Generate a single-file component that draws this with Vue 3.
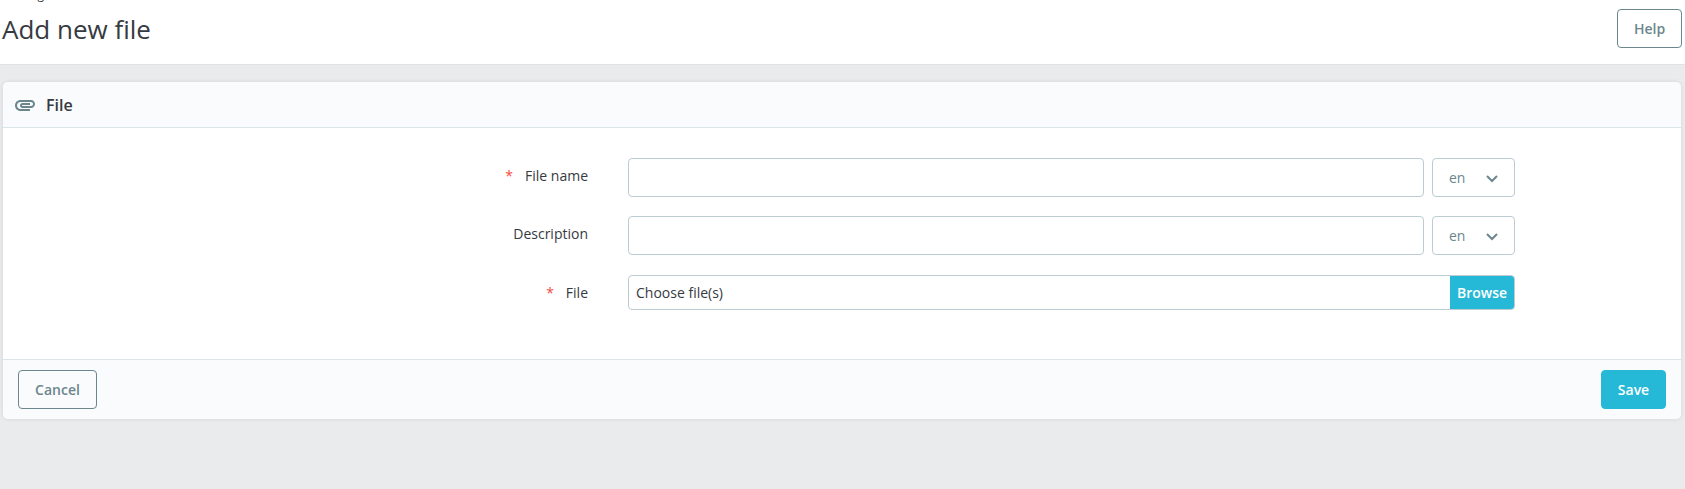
<template>
  <div class="page">
    <div class="page-head">
      <div class="head-left">
        <div class="crumb">Catalog</div>
        <h2 class="title">Add new file</h2>
      </div>
      <button type="button" class="btn btn-outline help-btn">Help</button>
    </div>

    <div class="panel">
      <div class="panel-heading">
        <svg class="clip" width="24" height="24" viewBox="0 0 24 24">
          <path fill="#6c868e" d="M2 12.500C2 9.460 4.460 7 7.500 7H18c2.210 0 4 1.790 4 4s-1.790 4-4 4H9.500C8.120 15 7 13.880 7 12.500S8.120 10 9.500 10H17v2H9.410c-.55 0-.55 1 0 1H18c1.100 0 2-.9 2-2s-.9-2-2-2H7.500C5.570 9 4 10.570 4 12.500S5.570 16 7.500 16H17v2H7.500C4.460 18 2 15.540 2 12.500z"/>
        </svg>
        <span>File</span>
      </div>

      <form class="panel-body" @submit.prevent>
        <div class="form-row">
          <label class="row-label"><span class="req">*</span>File name</label>
          <input type="text" class="form-input" />
          <div class="lang-btn">
            <span>en</span>
            <svg class="chevron" width="12" height="8" viewBox="0 0 12 8" fill="none"><path d="M1 1l5 5 5-5" stroke="#6c868e" stroke-width="2"/></svg>
          </div>
        </div>
        <div class="form-row">
          <label class="row-label">Description</label>
          <input type="text" class="form-input" />
          <div class="lang-btn">
            <span>en</span>
            <svg class="chevron" width="12" height="8" viewBox="0 0 12 8" fill="none"><path d="M1 1l5 5 5-5" stroke="#6c868e" stroke-width="2"/></svg>
          </div>
        </div>
        <div class="form-row file-row">
          <label class="row-label"><span class="req">*</span>File</label>
          <div class="file-box">
            <span class="file-text">Choose file(s)</span>
            <span class="browse">Browse</span>
          </div>
        </div>
      </form>

      <div class="panel-footer">
        <button type="button" class="btn btn-outline">Cancel</button>
        <button type="button" class="btn btn-save">Save</button>
      </div>
    </div>
  </div>
</template>

<script setup>
</script>

<style>
html, body {
  margin: 0;
  background: #eaebec;
}
</style>

<style scoped>
.page {
  height: 489px;
  overflow: hidden;
  background: #eaebec;
  font-family: "Open Sans", "Liberation Sans", sans-serif;
  font-size: 14px;
  color: #363a41;
}

.page-head {
  display: flex;
  justify-content: space-between;
  height: 55px;
  padding: 9px 3px 0 2px;
  background: #fff;
  border-bottom: 1px solid #dfe3e4;
  overflow: hidden;
}

.crumb {
  margin-top: -23px;
  height: 17px;
  font-size: 12px;
  line-height: 17px;
}

.title {
  margin: 10px 0 0;
  font-size: 26px;
  font-weight: 400;
  line-height: 33px;
}

.btn {
  box-sizing: border-box;
  height: 39px;
  border-radius: 4px;
  font-family: inherit;
  font-size: 14px;
  font-weight: 600;
  cursor: pointer;
}

.btn-outline {
  width: 79px;
  background: transparent;
  border: 1px solid #6c868e;
  color: #6c868e;
}

.help-btn {
  width: 65px;
  background: #fff;
}

.btn-save {
  width: 65px;
  background: #25b9d7;
  border: 1px solid #25b9d7;
  color: #fff;
}

.panel {
  margin: 17px 4px 0 3px;
  height: 337px;
  display: flex;
  flex-direction: column;
  background: #fff;
  border-radius: 5px;
  box-shadow: 0 0 4px rgba(0, 0, 0, 0.1);
}

.panel-heading {
  display: flex;
  align-items: center;
  gap: 9px;
  height: 45px;
  padding-left: 10px;
  background: #fafbfc;
  border-bottom: 1px solid #dbe6e9;
  border-radius: 5px 5px 0 0;
  font-size: 16px;
  font-weight: 600;
  flex-shrink: 0;
}

.panel-body {
  flex: 1;
  padding-top: 30px;
}

.form-row {
  display: flex;
  align-items: center;
  gap: 8px;
  height: 39px;
  margin-bottom: 19px;
}

.file-row {
  height: 35px;
  gap: 0;
  margin-top: 20px;
}

.row-label {
  width: 585px;
  margin-right: 32px;
  flex-shrink: 0;
  text-align: right;
  line-height: 20px;
  margin-top: -4px;
}

.file-row .row-label {
  margin-right: 40px;
  margin-top: 0;
}

.req {
  margin-right: 12px;
  color: #f54c3e;
}

.form-input {
  box-sizing: border-box;
  width: 796px;
  height: 39px;
  padding: 0 7px;
  background: #fff;
  border: 1px solid #bbcdd2;
  border-radius: 4px;
  font-family: inherit;
  font-size: 14px;
}

.lang-btn {
  box-sizing: border-box;
  display: flex;
  align-items: center;
  justify-content: space-between;
  width: 83px;
  height: 39px;
  padding: 0 16px 0 16px;
  border: 1px solid #bbcdd2;
  border-radius: 4px;
  color: #6c868e;
  line-height: 20px;
}

.chevron {
  margin-top: 3px;
}

.file-box {
  box-sizing: border-box;
  display: flex;
  align-items: center;
  justify-content: space-between;
  width: 887px;
  height: 35px;
  border: 1px solid #bbcdd2;
  border-radius: 4px;
  overflow: hidden;
}

.file-text {
  padding-left: 7px;
}

.browse {
  display: flex;
  align-items: center;
  justify-content: center;
  width: 64px;
  height: 100%;
  background: #25b9d7;
  color: #fff;
  font-weight: 600;
}

.panel-footer {
  display: flex;
  align-items: center;
  justify-content: space-between;
  flex-shrink: 0;
  height: 60px;
  padding: 0 15px;
  box-sizing: border-box;
  background: #fafbfc;
  border-top: 1px solid #dbe6e9;
  border-radius: 0 0 5px 5px;
}
</style>
